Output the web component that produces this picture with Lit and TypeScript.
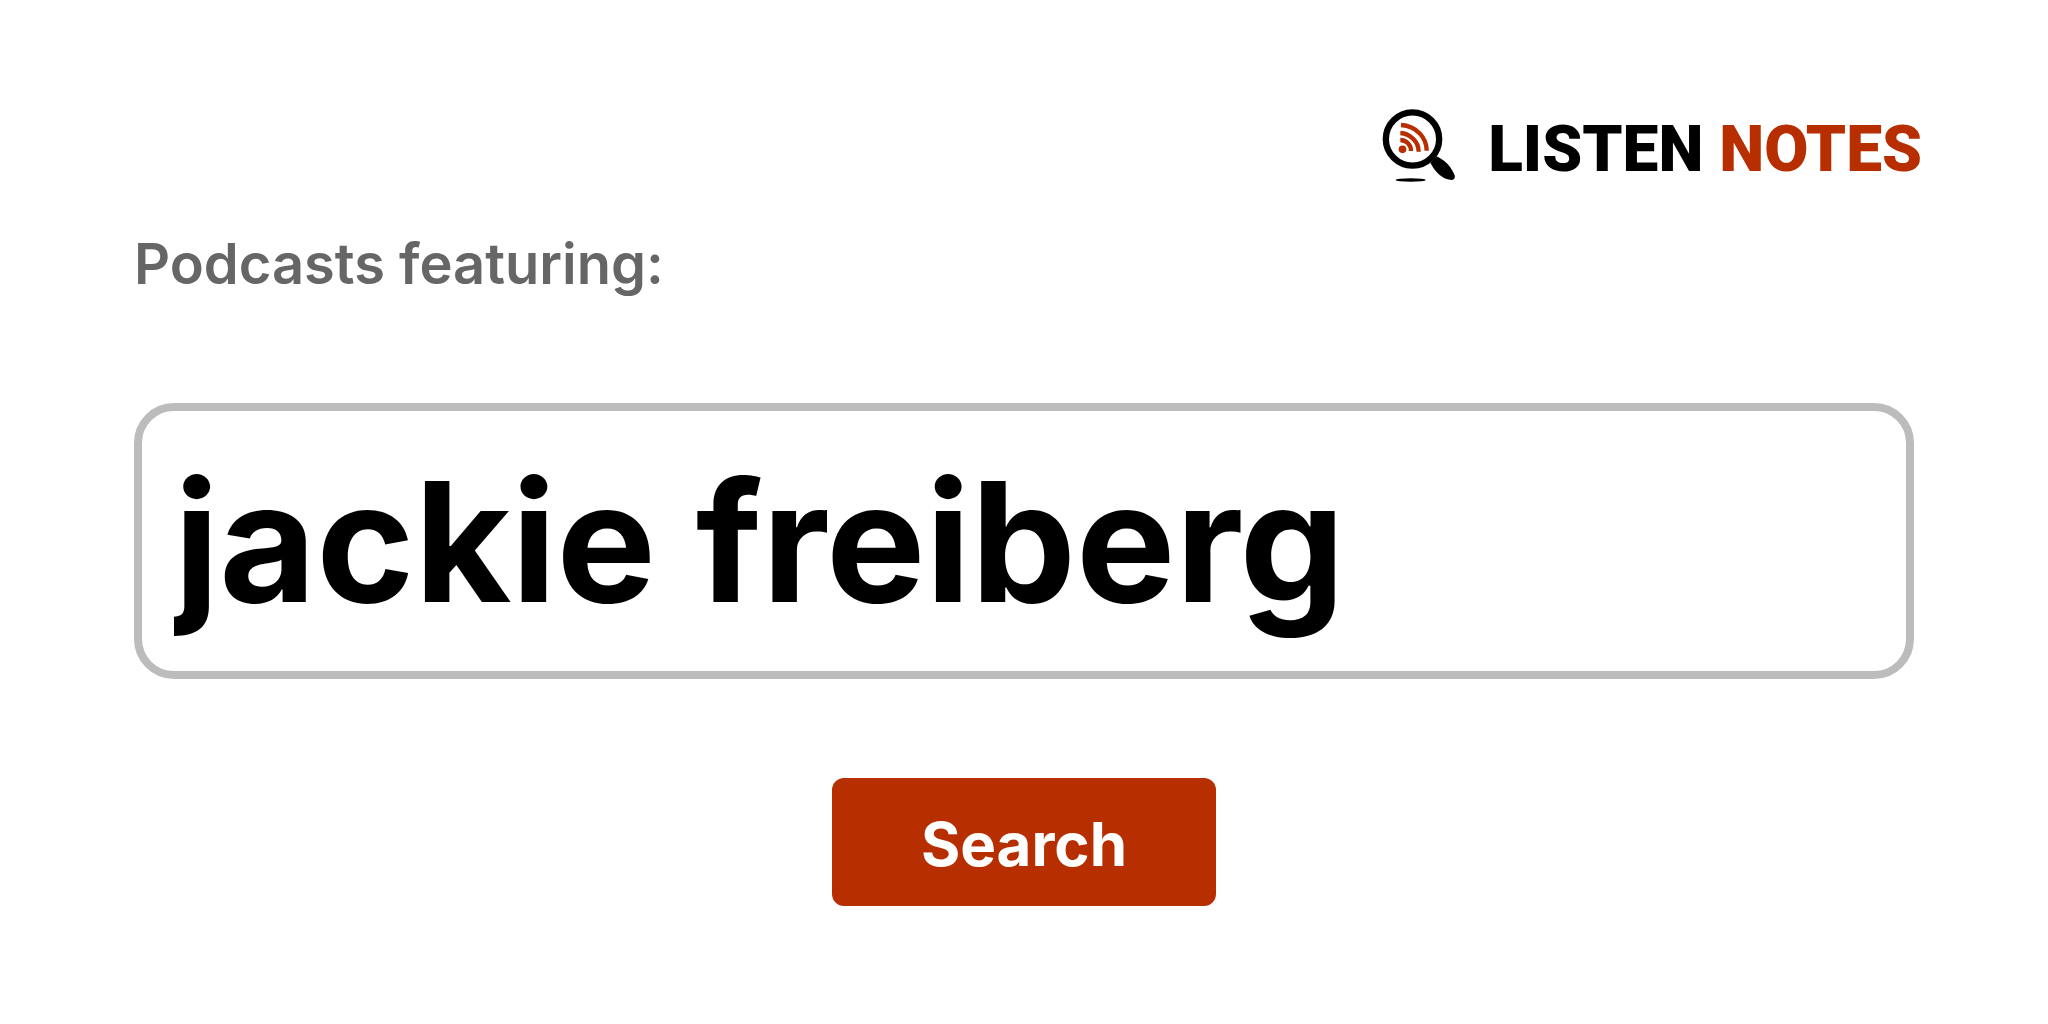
import { LitElement, html, css } from "lit";
import { customElement, state } from "lit/decorators.js";

@customElement("brand-logo")
class BrandLogo extends LitElement {
  static styles = css`
    :host {
      display: block;
    }
    .brand {
      display: flex;
      align-items: center;
      gap: 32px;
      color: #000;
      text-decoration: none;
    }
    .mark {
      display: block;
      flex: none;
      width: 75px;
      height: 75px;
    }
    .name {
      padding-top: 12px;
      font-family: Roboto, "Liberation Sans", sans-serif;
      font-size: 64px;
      font-weight: 900;
      line-height: 64px;
      white-space: nowrap;
    }
    .accent {
      color: #b72e00;
    }
  `;

  render() {
    return html`
      <a class="brand" href="#">
        <svg class="mark" viewBox="36 36 225 225" aria-hidden="true">
          <circle cx="130.5" cy="132" r="80" fill="#fff" stroke="#000" stroke-width="19" />
          <path
            d="M184 203 L203 184 Q215 190 226 198 Q246 214 257 241 Q260 253 248 255 Q222 253 202 230 Q192 219 184 203Z"
            fill="#000"
          />
          <ellipse cx="125" cy="255" rx="45" ry="5" fill="#000" />
          <circle cx="100.5" cy="163" r="11.5" fill="#b72e00" />
          <g fill="none" stroke="#b72e00" stroke-width="13">
            <path d="M94 135 A32 32 0 0 1 126 168" />
            <path d="M94 114 Q116 115 132 131 Q149 147 149 170" />
            <path d="M96 90 Q130 92 153 116 Q173 138 173 167" />
          </g>
        </svg>
        <span class="name">LISTEN <span class="accent">NOTES</span></span>
      </a>
    `;
  }
}

@customElement("app-root")
class AppRoot extends LitElement {
  @state() private query = "jackie freiberg";

  static styles = css`
    :host {
      display: block;
      font-family: Inter, "Liberation Sans", sans-serif;
      color: #000;
      background: #fff;
    }
    .page {
      box-sizing: border-box;
      min-height: 100vh;
      padding: 106px 134px 118px;
    }
    .header {
      display: flex;
      justify-content: flex-end;
      margin-right: -8px;
    }
    .form {
      display: flex;
      flex-direction: column;
      margin-top: 46px;
    }
    .label {
      font-size: 56px;
      font-weight: 600;
      line-height: 72px;
      color: #666;
    }
    .query {
      box-sizing: border-box;
      width: 100%;
      height: 276px;
      margin: 103px 0 99px;
      padding: 0 32px;
      border: 8px solid #bcbcbc;
      border-radius: 40px;
      outline: none;
      background: #fff;
      color: #000;
      font-family: inherit;
      font-size: 167px;
      font-weight: 700;
    }
    .submit {
      align-self: center;
      padding: 30px 89px 26px;
      border: 0;
      border-radius: 12px;
      background: #b72e00;
      color: #fff;
      font-family: inherit;
      font-size: 60px;
      font-weight: 700;
      line-height: 72px;
      cursor: pointer;
    }
  `;

  private onInput(e: Event) {
    this.query = (e.target as HTMLInputElement).value;
  }

  render() {
    return html`
      <main class="page">
        <header class="header"><brand-logo></brand-logo></header>
        <form class="form" @submit=${(e: Event) => e.preventDefault()}>
          <label class="label" for="query">Podcasts featuring:</label>
          <input
            class="query"
            id="query"
            type="text"
            spellcheck="false"
            autocomplete="off"
            .value=${this.query}
            @input=${this.onInput}
          />
          <button class="submit" type="submit">Search</button>
        </form>
      </main>
    `;
  }
}
